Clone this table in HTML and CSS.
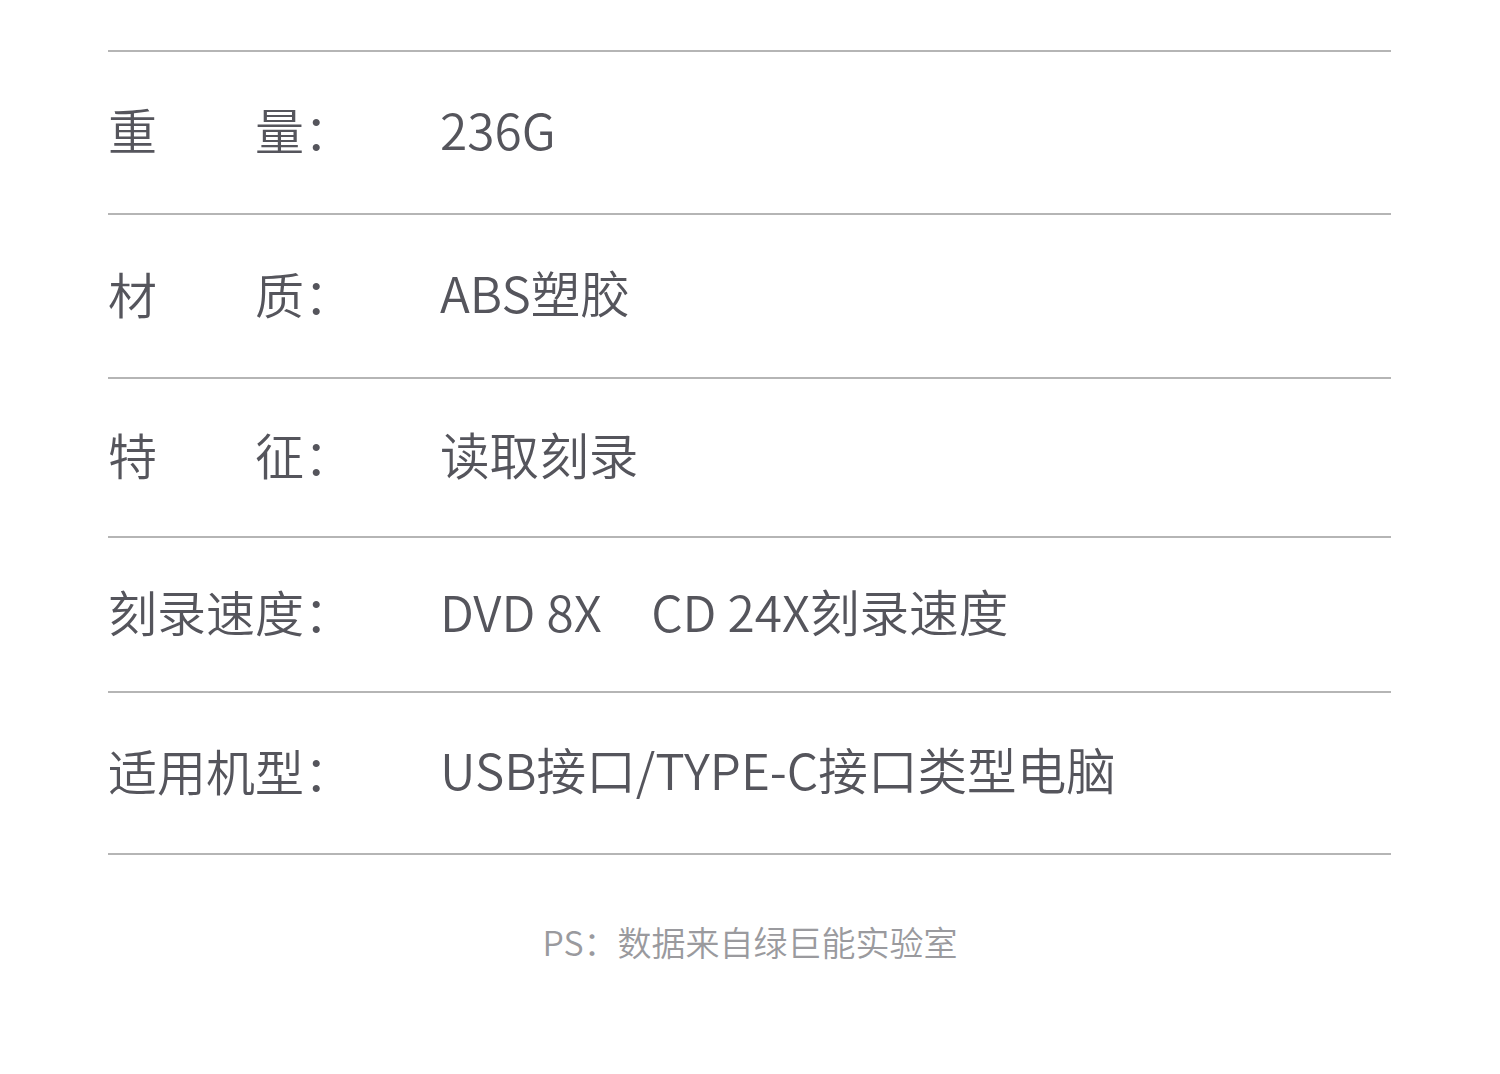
FILE: index.html
```html
<!DOCTYPE html>
<html lang="zh-CN">
<head>
<meta charset="utf-8">
<title>参数</title>
<link rel="stylesheet" href="styles.css">
</head>
<body>
<div class="page">
  <div class="specs">
    <div class="row r1"><div class="label">重　　量：</div><div class="value">236G</div></div>
    <div class="row r2"><div class="label">材　　质：</div><div class="value">ABS塑胶</div></div>
    <div class="row r3"><div class="label">特　　征：</div><div class="value">读取刻录</div></div>
    <div class="row r4"><div class="label">刻录速度：</div><div class="value">DVD 8X　CD 24X刻录速度</div></div>
    <div class="row r5"><div class="label">适用机型：</div><div class="value">USB接口/TYPE-C接口类型电脑</div></div>
  </div>
  <div class="note">PS：数据来自绿巨能实验室</div>
</div>
</body>
</html>
```
FILE: styles.css
```css
html, body {
  margin: 0;
  padding: 0;
  background: #ffffff;
}
body {
  font-family: "Noto Sans CJK SC", "Noto Sans", sans-serif;
  color: #55555c;
}
.page {
  width: 1500px;
  height: 1074px;
  padding-top: 50px;
  box-sizing: border-box;
}
.specs {
  margin-left: 108px;
  width: 1283px;
  border-bottom: 2px solid #b5b5b5;
}
.row {
  display: flex;
  align-items: center;
  border-top: 2px solid #b5b5b5;
  box-sizing: border-box;
  padding-bottom: 8px;
  font-size: 49px;
  font-weight: 350;
  line-height: 1;
}
.r1 { height: 163px; }
.r2 { height: 164px; }
.r3 { height: 159px; }
.r4 { height: 155px; }
.r5 { height: 162px; }
.label {
  width: 332px;
  flex: none;
  white-space: pre;
}
.value {
  font-size: 49.6px;
  white-space: pre;
}
.note {
  text-align: center;
  font-size: 34px;
  font-weight: 350;
  color: #9a9a9e;
  margin-top: 70px;
  line-height: 1;
}
```
